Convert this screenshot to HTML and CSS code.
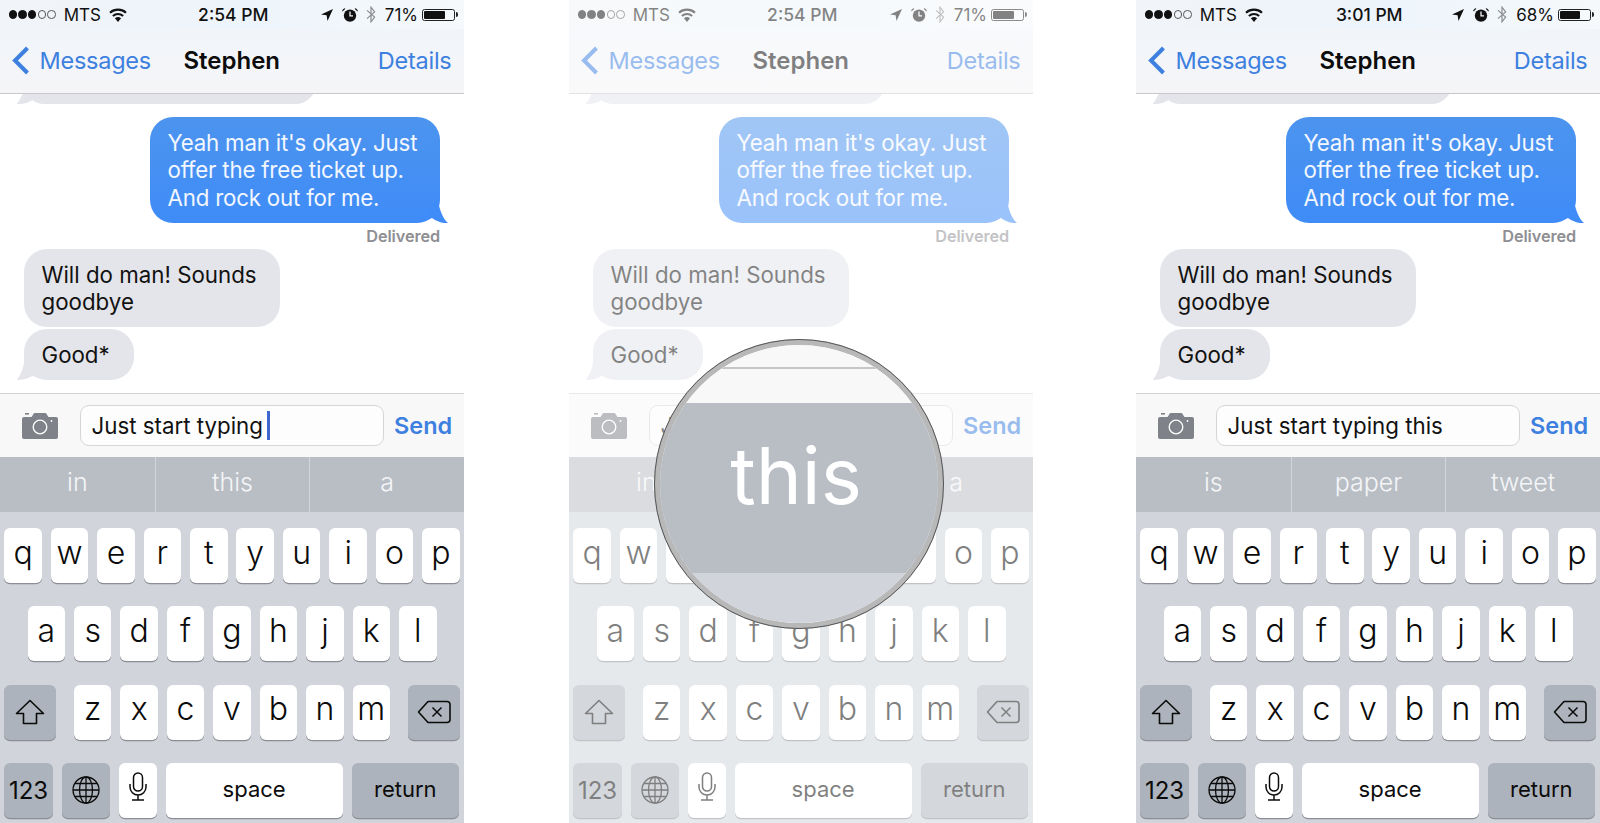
FILE: index.html
```html
<!DOCTYPE html>
<html lang="en">
<head>
<meta charset="utf-8">
<title>Messages predictive typing</title>
<link rel="stylesheet" href="styles.css">
</head>
<body>
<svg class="defs" width="0" height="0" aria-hidden="true">
  <symbol id="i-wifi" viewBox="0 0 18 14"><path d="M9 14 5.9 10.3a4.6 4.6 0 0 1 6.2 0ZM4.5 8.7 3.2 7.2a8.8 8.8 0 0 1 11.6 0l-1.3 1.5a6.8 6.8 0 0 0-9 0ZM1.7 5.5.3 3.9a13.1 13.1 0 0 1 17.4 0l-1.4 1.6a11 11 0 0 0-14.6 0Z"/></symbol>
  <symbol id="i-loc" viewBox="0 0 12 12"><path d="M12 0 0 5.6l5.6.7.9 5.7Z"/></symbol>
  <symbol id="i-alarm" viewBox="0 0 16 14"><circle cx="8" cy="7.6" r="6.2"/><path d="M.6 3.6 3.4.8 2.2.3.2 2.2ZM15.4 3.6 12.6.8l1.2-.5 2 1.9Z"/><path d="M8 3.6v4.2h3" fill="none" stroke="#f3f6fa" stroke-width="1.3"/></symbol>
  <symbol id="i-bt" viewBox="0 0 10 17"><path d="M1 4.4 8.6 11 5 15.8V1.2L8.6 6 1 12.6" fill="none" stroke="currentColor" stroke-width="1.2"/></symbol>
  <symbol id="i-chev" viewBox="0 0 18 29"><path d="M15.5 2 3 14.5 15.5 27" fill="none" stroke="currentColor" stroke-width="4"/></symbol>
  <symbol id="i-cam" viewBox="0 0 36 27"><path d="M3 1h4v1.600H3Z"/><path d="M2 5h7.500l2.700-4h11.600l2.700 4H34a2 2 0 0 1 2 2v18a2 2 0 0 1-2 2H2a2 2 0 0 1-2-2V7a2 2 0 0 1 2-2Z"/><circle cx="18" cy="15" r="6.800" fill="none" stroke="#fff" stroke-width="1.300"/><circle cx="29.500" cy="9" r=".9" fill="#fff"/></symbol>
  <symbol id="i-shift" viewBox="0 0 30 26"><path d="M15 1.500 1.500 14.500H8.500V24.500H21.500V14.500H28.500Z" fill="none" stroke="currentColor" stroke-width="1.600" stroke-linejoin="round"/></symbol>
  <symbol id="i-del" viewBox="0 0 34 24"><path d="M11 1.500H30a3 3 0 0 1 3 3v15a3 3 0 0 1-3 3H11L1.500 12Z" fill="none" stroke="currentColor" stroke-width="1.600" stroke-linejoin="round"/><path d="M15.500 7.500 24.500 16.500M24.500 7.500 15.500 16.500" fill="none" stroke="currentColor" stroke-width="1.500"/></symbol>
  <symbol id="i-globe" viewBox="0 0 28 28"><g fill="none" stroke="currentColor" stroke-width="1.300"><circle cx="14" cy="14" r="13"/><ellipse cx="14" cy="14" rx="6.500" ry="13"/><path d="M14 1v26M1 14h26M3 7.500h22M3 20.500h22"/></g></symbol>
  <symbol id="i-mic" viewBox="0 0 18 29"><g fill="none" stroke="currentColor" stroke-width="1.500"><rect x="4.500" y="1" width="9" height="18" rx="4.500"/><path d="M1 12v3a8 8 0 0 0 16 0v-3M9 23v5M3 28h12"/></g></symbol>
</svg>

<main class="triptych">

  <section class="phone">
    <div class="status">
      <div class="status-side">
        <span class="dots"><i class="dot"></i><i class="dot"></i><i class="dot"></i><i class="dot off"></i><i class="dot off"></i></span>
        <span class="carrier">MTS</span>
        <svg class="ic-wifi"><use href="#i-wifi"/></svg>
      </div>
      <div class="clock">2:54 PM</div>
      <div class="status-side end">
        <svg class="ic-loc"><use href="#i-loc"/></svg>
        <svg class="ic-alarm"><use href="#i-alarm"/></svg>
        <svg class="ic-bt"><use href="#i-bt"/></svg>
        <span class="pct">71%</span>
        <span class="battery"><span class="charge c71"></span></span>
      </div>
    </div>
    <nav class="nav">
      <div class="back"><svg class="ic-chev"><use href="#i-chev"/></svg>Messages</div>
      <div class="title">Stephen</div>
      <div class="details">Details</div>
    </nav>
    <div class="thread">
      <div class="bubble in partial"></div>
      <div class="bubble out">Yeah man it's okay. Just<br>offer the free ticket up.<br>And rock out for me.</div>
      <div class="receipt">Delivered</div>
      <div class="bubble in plain">Will do man! Sounds<br>goodbye</div>
      <div class="bubble in good">Good*</div>
    </div>
    <div class="composer">
      <svg class="ic-cam"><use href="#i-cam"/></svg>
      <div class="field">Just start typing <i class="caret"></i></div>
      <div class="send">Send</div>
    </div>
    <div class="predict"><span>in</span><span>this</span><span>a</span></div>
    <div class="keyboard">
      <div class="row"><b class="key">q</b><b class="key">w</b><b class="key">e</b><b class="key">r</b><b class="key">t</b><b class="key">y</b><b class="key">u</b><b class="key">i</b><b class="key">o</b><b class="key">p</b></div>
      <div class="row center"><b class="key">a</b><b class="key">s</b><b class="key">d</b><b class="key">f</b><b class="key">g</b><b class="key">h</b><b class="key">j</b><b class="key">k</b><b class="key">l</b></div>
      <div class="row split"><b class="key fn wide"><svg class="ic-shift"><use href="#i-shift"/></svg></b><div class="letters"><b class="key">z</b><b class="key">x</b><b class="key">c</b><b class="key">v</b><b class="key">b</b><b class="key">n</b><b class="key">m</b></div><b class="key fn wide"><svg class="ic-del"><use href="#i-del"/></svg></b></div>
      <div class="row"><b class="key fn mod num">123</b><b class="key fn mod"><svg class="ic-globe"><use href="#i-globe"/></svg></b><b class="key"><svg class="ic-mic"><use href="#i-mic"/></svg></b><b class="key space small">space</b><b class="key fn ret small">return</b></div>
    </div>
  </section>

  <section class="phone">
    <div class="dimmed">
      <div class="status">
        <div class="status-side">
          <span class="dots"><i class="dot"></i><i class="dot"></i><i class="dot"></i><i class="dot off"></i><i class="dot off"></i></span>
          <span class="carrier">MTS</span>
          <svg class="ic-wifi"><use href="#i-wifi"/></svg>
        </div>
        <div class="clock">2:54 PM</div>
        <div class="status-side end">
          <svg class="ic-loc"><use href="#i-loc"/></svg>
          <svg class="ic-alarm"><use href="#i-alarm"/></svg>
          <svg class="ic-bt"><use href="#i-bt"/></svg>
          <span class="pct">71%</span>
          <span class="battery"><span class="charge c71"></span></span>
        </div>
      </div>
      <nav class="nav">
        <div class="back"><svg class="ic-chev"><use href="#i-chev"/></svg>Messages</div>
        <div class="title">Stephen</div>
        <div class="details">Details</div>
      </nav>
      <div class="thread">
        <div class="bubble in partial"></div>
        <div class="bubble out">Yeah man it's okay. Just<br>offer the free ticket up.<br>And rock out for me.</div>
        <div class="receipt">Delivered</div>
        <div class="bubble in plain">Will do man! Sounds<br>goodbye</div>
        <div class="bubble in good">Good*</div>
      </div>
      <div class="composer">
        <svg class="ic-cam"><use href="#i-cam"/></svg>
        <div class="field">J</div>
        <div class="send">Send</div>
      </div>
      <div class="predict"><span>in</span><span></span><span>a</span></div>
      <div class="keyboard">
        <div class="row"><b class="key">q</b><b class="key">w</b><b class="key">e</b><b class="key">r</b><b class="key">t</b><b class="key">y</b><b class="key">u</b><b class="key">i</b><b class="key">o</b><b class="key">p</b></div>
        <div class="row center"><b class="key">a</b><b class="key">s</b><b class="key">d</b><b class="key">f</b><b class="key">g</b><b class="key">h</b><b class="key">j</b><b class="key">k</b><b class="key">l</b></div>
        <div class="row split"><b class="key fn wide"><svg class="ic-shift"><use href="#i-shift"/></svg></b><div class="letters"><b class="key">z</b><b class="key">x</b><b class="key">c</b><b class="key">v</b><b class="key">b</b><b class="key">n</b><b class="key">m</b></div><b class="key fn wide"><svg class="ic-del"><use href="#i-del"/></svg></b></div>
        <div class="row"><b class="key fn mod num">123</b><b class="key fn mod"><svg class="ic-globe"><use href="#i-globe"/></svg></b><b class="key"><svg class="ic-mic"><use href="#i-mic"/></svg></b><b class="key space small">space</b><b class="key fn ret small">return</b></div>
      </div>
    </div>
    <div class="magnifier">
      <div class="lens-top"><i class="lens-line"></i></div>
      <div class="lens-band">this</div>
      <div class="lens-bottom"></div>
    </div>
  </section>

  <section class="phone">
    <div class="status">
      <div class="status-side">
        <span class="dots"><i class="dot"></i><i class="dot"></i><i class="dot"></i><i class="dot off"></i><i class="dot off"></i></span>
        <span class="carrier">MTS</span>
        <svg class="ic-wifi"><use href="#i-wifi"/></svg>
      </div>
      <div class="clock">3:01 PM</div>
      <div class="status-side end">
        <svg class="ic-loc"><use href="#i-loc"/></svg>
        <svg class="ic-alarm"><use href="#i-alarm"/></svg>
        <svg class="ic-bt"><use href="#i-bt"/></svg>
        <span class="pct">68%</span>
        <span class="battery"><span class="charge c68"></span></span>
      </div>
    </div>
    <nav class="nav">
      <div class="back"><svg class="ic-chev"><use href="#i-chev"/></svg>Messages</div>
      <div class="title">Stephen</div>
      <div class="details">Details</div>
    </nav>
    <div class="thread">
      <div class="bubble in partial"></div>
      <div class="bubble out">Yeah man it's okay. Just<br>offer the free ticket up.<br>And rock out for me.</div>
      <div class="receipt">Delivered</div>
      <div class="bubble in plain">Will do man! Sounds<br>goodbye</div>
      <div class="bubble in good">Good*</div>
    </div>
    <div class="composer">
      <svg class="ic-cam"><use href="#i-cam"/></svg>
      <div class="field">Just start typing this</div>
      <div class="send">Send</div>
    </div>
    <div class="predict"><span>is</span><span>paper</span><span>tweet</span></div>
    <div class="keyboard">
      <div class="row"><b class="key">q</b><b class="key">w</b><b class="key">e</b><b class="key">r</b><b class="key">t</b><b class="key">y</b><b class="key">u</b><b class="key">i</b><b class="key">o</b><b class="key">p</b></div>
      <div class="row center"><b class="key">a</b><b class="key">s</b><b class="key">d</b><b class="key">f</b><b class="key">g</b><b class="key">h</b><b class="key">j</b><b class="key">k</b><b class="key">l</b></div>
      <div class="row split"><b class="key fn wide"><svg class="ic-shift"><use href="#i-shift"/></svg></b><div class="letters"><b class="key">z</b><b class="key">x</b><b class="key">c</b><b class="key">v</b><b class="key">b</b><b class="key">n</b><b class="key">m</b></div><b class="key fn wide"><svg class="ic-del"><use href="#i-del"/></svg></b></div>
      <div class="row"><b class="key fn mod num">123</b><b class="key fn mod"><svg class="ic-globe"><use href="#i-globe"/></svg></b><b class="key"><svg class="ic-mic"><use href="#i-mic"/></svg></b><b class="key space small">space</b><b class="key fn ret small">return</b></div>
    </div>
  </section>

</main>
</body>
</html>
```
FILE: styles.css
```css
* { box-sizing: border-box; }
html, body { margin: 0; height: 100%; background: #fff; }
body { font-family: Inter, Roboto, "Liberation Sans", sans-serif; color: #111; overflow: hidden; }
.defs { position: absolute; }
i, b { font-style: normal; font-weight: inherit; }

.triptych { display: flex; justify-content: space-between; width: 1600px; height: 823px; }
.phone { position: relative; width: 464px; height: 823px; flex: none; }
.phone:nth-child(2) { margin-left: 1px; margin-right: -1px; }
.dimmed { opacity: .52; }

/* status bar */
.status {
  display: grid; grid-template-columns: 1fr auto 1fr; align-items: center;
  height: 29px; padding: 0 7px 0 8.500px; font-size: 17px;
  background: linear-gradient(90deg, #f1f4f8, #edf4fb 55%, #f6f9fb);
}
.status-side { display: flex; align-items: center; }
.status-side.end { justify-content: flex-end; }
.dots { display: flex; gap: 1.200px; }
.dot { width: 8.500px; height: 8.500px; border-radius: 50%; background: #111; border: 1px solid #111; }
.dot.off { background: none; border-color: #555; }
.carrier { margin-left: 8px; }
.ic-wifi { width: 18px; height: 14px; margin-left: 8px; fill: #111; }
.clock { font-weight: 500; font-size: 17.500px; margin-left: 1px; }
.ic-loc { width: 12px; height: 12px; fill: #111; }
.ic-alarm { width: 16px; height: 14px; margin-left: 9px; fill: #111; }
.ic-bt { width: 10px; height: 17px; margin-left: 8px; color: #8a8c90; }
.pct { margin-left: 9px; }
.battery {
  position: relative; display: block; width: 33px; height: 12px; margin-left: 4px; margin-right: 2px;
  border: 1px solid #222; border-radius: 2.500px; padding: 1px;
}
.battery::after {
  content: ""; position: absolute; right: -3.500px; top: 2.500px;
  width: 2px; height: 5px; background: #222; border-radius: 0 2px 2px 0;
}
.charge { display: block; height: 100%; background: #111; border-radius: 1px; }
.c71 { width: 71%; }
.c68 { width: 68%; }

/* nav */
.nav {
  display: grid; grid-template-columns: 1fr auto 1fr; align-items: center;
  height: 65px; padding: 0 12.500px 1px 12px; font-size: 23.500px; letter-spacing: -.25px;
  background: linear-gradient(180deg, #f1f5fa, #f5f5f7);
  border-bottom: 1.500px solid #c8c8cb;
}
.back { display: flex; align-items: center; color: #3d80e0; }
.ic-chev { width: 18px; height: 29px; margin-right: 9.500px; color: #3d80e0; }
.title { font-weight: 600; font-size: 24px; letter-spacing: 0; color: #0c0c0c; }
.details { justify-self: end; color: #3d80e0; }

/* thread */
.thread {
  display: flex; flex-direction: column; align-items: flex-start;
  height: 299px; overflow: hidden; background: #fff; font-size: 22.300px; line-height: 27.300px;
}
.bubble { position: relative; flex: none; padding: 11.500px 18px; border-radius: 23px; white-space: nowrap; }
.bubble.in { margin-left: 23.500px; background: #e4e5ea; color: #121212; }
.partial { width: 292px; height: 41px; margin-top: -31px; }
.out {
  align-self: flex-end; width: 290px; margin-top: 13px; margin-right: 24px; letter-spacing: -.2px;
  padding: 12px 18px 12px 17.500px;
  color: #f2f7ff; background: linear-gradient(180deg, #4c94ee, #3f8cf8);
}
.out::after {
  content: ""; position: absolute; right: -8px; bottom: 0; width: 30px; height: 24px;
  background: #3f8cf8; clip-path: path("M20 0 C21 10 25 20 30 24 C24 24.500 18 22 14 19 C10 21 5 22 0 22Z");
}
.in.partial::after, .in.good::after {
  content: ""; position: absolute; left: -7px; bottom: 0; width: 30px; height: 24px;
  background: #e4e5ea; clip-path: path("M8 0 C8 10 5 19 0 24 C6 24.500 12 23 16 20 C20 22 26 23 30 22Z");
}
.receipt {
  align-self: flex-end; flex: none; margin-right: 24px; height: 26.500px;
  font-size: 16.300px; line-height: 27px; font-weight: 600; letter-spacing: -.1px; color: #8e8e93;
}
.good { margin-top: 2.500px; width: 110px; }
.plain { width: 256px; }

/* composer */
.composer {
  display: flex; align-items: center; height: 64px; padding: 0 10px 0 22px;
  background: #f8f8f8; border-top: 1.500px solid #d4d4d6;
}
.ic-cam { width: 36px; height: 27px; fill: #7f8288; flex: none; }
.field {
  display: flex; align-items: center; width: 304px; height: 41px; margin-left: 22px; padding-left: 10.500px;
  background: #fdfdfd; border: 1px solid #d6d6d9; border-radius: 9px;
  font-size: 22.300px; white-space: pre;
}
.caret { width: 3px; height: 29px; margin-left: -2px; background: #3f67cf; }
.send { margin-left: 10px; font-size: 23.500px; font-weight: 600; color: #3d80e0; }

/* predictions */
.predict {
  display: grid; grid-template-columns: 1fr 1fr 1fr; height: 55px;
  background: #b9bec5; color: #f4f5f7; font-size: 25px; font-weight: 300;
}
.predict span { display: flex; align-items: center; justify-content: center; padding-bottom: 6px; }
.predict span + span { border-left: 1px solid #d2d5da; }

/* keyboard */
.keyboard {
  display: flex; flex-direction: column; gap: 23.300px; height: 312px;
  padding: 16px 4.300px 0; background: #d1d5db;
}
.row { display: flex; gap: 8.950px; height: 55px; }
.row.center { justify-content: center; }
.row.split { justify-content: space-between; }
.letters { display: flex; gap: 8.950px; }
.key {
  display: flex; align-items: center; justify-content: center; flex: none;
  width: 37.500px; height: 55px; padding-bottom: 7px;
  background: #fff; border-radius: 6px; box-shadow: 0 1.300px 0 #8b8e94;
  font-size: 32px; font-weight: 300; color: #0b0b0b;
}
.fn { background: #adb3bc; }
.wide { width: 52px; padding-bottom: 0; }
.mod { width: 48.500px; padding-bottom: 0; }
.num { font-size: 24px; font-weight: 400; }
.small { font-size: 22px; font-weight: 400; padding-bottom: 2px; }
.space { width: 177px; }
.ret { width: 107.500px; padding-bottom: 3px; }
.ic-shift { width: 30px; height: 26px; }
.ic-del { width: 34px; height: 24px; }
.ic-globe { width: 28px; height: 28px; }
.ic-mic { width: 18px; height: 29px; }

/* magnifier */
.magnifier {
  position: absolute; left: 85px; top: 339px; width: 290px; height: 290px;
  display: flex; flex-direction: column; overflow: hidden; border-radius: 50%;
  border: 6px solid #b8b8b8; outline: 1px solid #555; outline-offset: -1px;
  box-shadow: inset 0 0 0 1px #eee;
}
.lens-top { height: 58px; flex: none; background: #f8f8f8; padding-top: 22px; display: flex; justify-content: center; }
.lens-line { width: 154px; height: 2px; background: #c6c6ca; }
.lens-band {
  display: flex; align-items: center; justify-content: center; height: 170px; flex: none;
  padding: 0 6px 26px 0; background: #b9bec5; color: #fff; font-size: 78px; font-weight: 400;
}
.lens-bottom { flex: 1; background: #d1d5db; }
```
